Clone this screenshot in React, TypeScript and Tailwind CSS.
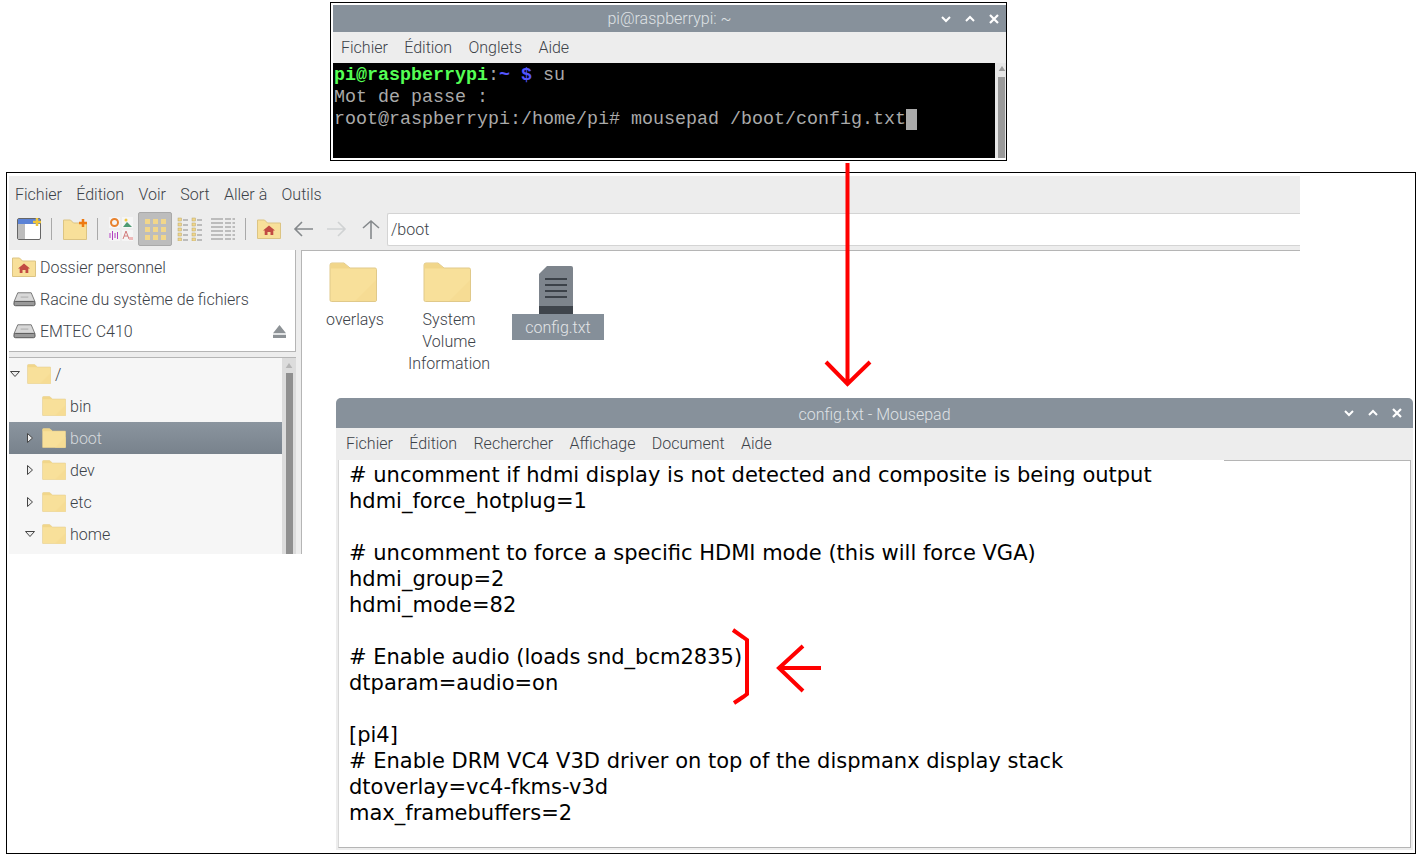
const ui = "font-['Roboto','Liberation_Sans',sans-serif] font-light";

function Folder({ className }: { className: string }) {
  return (
    <svg viewBox="0 0 48 40" className={className}>
      <path d="M1 3a2 2 0 0 1 2-2h12l6 5h25a1.500 1.500 0 0 1 1.500 1.500V38a1.500 1.500 0 0 1-1.500 1.500H2.500A1.500 1.500 0 0 1 1 38Z" fill="#f8e09a" stroke="#e0c98a" />
      <path d="M1.500 3a1.500 1.500 0 0 1 1.500-1.500h12l6 5H1.500Z" fill="#f1d68a" />
      <path d="M26 39 47 18V38a1 1 0 0 1-1 1Z" fill="#f6dc94" />
    </svg>
  );
}

function HomeFolder({ className }: { className: string }) {
  return (
    <svg viewBox="0 0 24 20" className={className}>
      <path d="M.5 1h7l3 3h13v15.500H.5Z" fill="#f8e09a" stroke="#dcc483" />
      <path d="M12 6.500 18 11.500h-1.700V16h-2.800v-3h-3v3H7.700v-4.500H6Z" fill="#c24b43" />
    </svg>
  );
}

function Drive({ className }: { className: string }) {
  return (
    <svg viewBox="0 0 24 16" className={className}>
      <path d="M5 1.500h14l4 9.500H1Z" fill="#d8d8d8" stroke="#777" />
      <rect x="1" y="10.500" width="22" height="4.500" rx="1.500" fill="#9a9a9a" stroke="#555" />
      <path d="M8 6h8" stroke="#aaa" />
    </svg>
  );
}

function WinButtons() {
  return (
    <div className="flex items-center gap-[14px]">
      <svg viewBox="0 0 10 10" className="w-[10px] h-[10px]"><path d="M1 3l4 4 4-4" fill="none" stroke="#fff" strokeWidth="2" /></svg>
      <svg viewBox="0 0 10 10" className="w-[10px] h-[10px]"><path d="M1 7l4-4 4 4" fill="none" stroke="#fff" strokeWidth="2" /></svg>
      <svg viewBox="0 0 10 10" className="w-[10px] h-[10px]"><path d="M1 1l8 8M9 1l-8 8" fill="none" stroke="#fff" strokeWidth="2.200" /></svg>
    </div>
  );
}

function TitleBar({ title, className, titleClass }: { title: string; className: string; titleClass: string }) {
  return (
    <div className={`relative flex items-center justify-end bg-[#87919b] ${className}`}>
      <span className={`absolute inset-0 flex items-center justify-center text-[16px] text-[#dfe2e5] ${titleClass} ${ui}`}>{title}</span>
      <div className="relative"><WinButtons /></div>
    </div>
  );
}

function Sep() {
  return <div className="w-px h-[22px] bg-[#a9a9a9]" />;
}

function Terminal() {
  return (
    <div className="absolute left-[330px] top-[2px] w-[677px] h-[159px] border border-black pl-[2px] pt-[2px] pb-[2px] bg-white">
      <TitleBar title="pi@raspberrypi: ~" className="h-[27px] pr-[7px]" titleClass="pt-px" />
      <div className={`flex gap-[16.300px] h-[31px] items-center pl-[8px] bg-[#ededed] text-[16px] text-[#3c4248] ${ui}`}>
        <span>Fichier</span><span>Édition</span><span>Onglets</span><span>Aide</span>
      </div>
      <div className="flex h-[95px]">
        <div className="flex-1 bg-black pl-px pt-[2px] font-['Liberation_Mono',monospace] text-[18.330px] leading-[22px] text-[#aaaaaa] whitespace-pre">
          <div><b className="text-[#55ff55]">pi@raspberrypi</b>:<b className="text-[#5555ff]">~ $</b> su</div>
          <div>Mot de passe :</div>
          <div className="flex">root@raspberrypi:/home/pi# mousepad /boot/config.txt<span className="w-[11px] h-[21px] bg-[#aaaaaa]" /></div>
        </div>
        <div className="w-[11px] bg-[#e6e6e6] flex flex-col items-center pl-[2px] pt-[3px]">
          <svg viewBox="0 0 8 6" className="w-[8px] h-[5px]"><path d="M4 0l4 6H0Z" fill="#9a9a9a" /></svg>
          <div className="w-[7px] flex-1 mt-[6px] bg-[#9a9a9a]" />
        </div>
      </div>
    </div>
  );
}

function GridViewIcon() {
  return (
    <div className="grid grid-cols-3 gap-x-[3px] gap-y-[3px]">
      {Array.from({ length: 9 }).map((_, i) => (
        <div key={i} className="w-[5px] h-[5px] bg-[#f1d68a]" />
      ))}
    </div>
  );
}

function ListIcon() {
  return (
    <svg viewBox="0 0 26 24" className="w-[26px] h-[24px]">
      {[1, 6, 11, 16, 21].map((y) => (
        <g key={y}>
          <rect x="1" y={y} width="3.500" height="3" fill="#f1d68a" stroke="#b9a66d" strokeWidth=".5" />
          <path d={`M6 ${y + 2}h5`} stroke="#8b8b8b" />
          <rect x="15" y={y} width="3.500" height="3" fill="#f1d68a" stroke="#b9a66d" strokeWidth=".5" />
          <path d={`M20 ${y + 2}h5`} stroke="#8b8b8b" />
        </g>
      ))}
    </svg>
  );
}

function DetailIcon() {
  return (
    <svg viewBox="0 0 24 24" className="w-[24px] h-[24px]">
      {[2, 6, 10, 14, 18, 22].map((y) => (
        <g key={y}>
          <path d={`M0 ${y}h12`} stroke="#8b8b8b" />
          <path d={`M14 ${y}h6M21.500 ${y}h2.500`} stroke="#8b8b8b" />
        </g>
      ))}
    </svg>
  );
}

function Toolbar() {
  return (
    <div className="flex items-center h-[38px] pb-[4px] pl-[8px]">
      <svg viewBox="0 0 24 22" className="w-[24px] h-[22px]">
        <rect x=".5" y=".5" width="23" height="21" rx="1.500" fill="#fff" stroke="#666" />
        <rect x="1" y="1" width="22" height="5" fill="#5b82d6" />
        <rect x="1" y="6" width="7" height="15" fill="#bdbdbd" />
        <path d="M20 0v8M16 4h8" stroke="#f0c63c" strokeWidth="2.500" />
      </svg>
      <div className="ml-[10px]"><Sep /></div>
      <svg viewBox="0 0 24 21" className="ml-[11px] w-[24px] h-[21px]">
        <path d="M.5 1h7l3 3h13v16.500H.5Z" fill="#f8e09a" stroke="#dcc483" />
        <path d="M20 0v8M16 4h8" stroke="#ee7a12" strokeWidth="2.500" />
      </svg>
      <div className="ml-[10px]"><Sep /></div>
      <svg viewBox="0 0 24 24" className="ml-[11px] w-[24px] h-[24px]">
        <rect x="0" y="0" width="11" height="11" fill="#f5f5f5" />
        <circle cx="5.500" cy="5.500" r="3.500" fill="none" stroke="#e8822e" strokeWidth="2" />
        <rect x="13" y="0" width="11" height="11" fill="#f5f5f5" />
        <path d="M14 10l4-5 5 5Z" fill="#4d9a72" />
        <circle cx="17" cy="3" r="1.500" fill="#f0c63c" />
        <rect x="0" y="13" width="11" height="11" fill="#f5f5f5" />
        <path d="M1 16v5M3.500 14v9M6 16v5M8.500 15v7" stroke="#b13fc0" />
        <rect x="13" y="13" width="11" height="11" fill="#f5f5f5" />
        <path d="M14 22l3-8 3 8M15 19h4" fill="none" stroke="#d27c7c" />
        <rect x="20" y="20" width="4" height="3" fill="#eeb9b9" />
      </svg>
      <div className="ml-[5px] flex items-center justify-center w-[34px] h-[34px] bg-[#bdbdbd] border border-[#a9a9a9] rounded-[2px]">
        <GridViewIcon />
      </div>
      <div className="ml-[5px]"><ListIcon /></div>
      <div className="ml-[8px]"><DetailIcon /></div>
      <div className="ml-[10px]"><Sep /></div>
      <HomeFolder className="ml-[11px] w-[24px] h-[20px]" />
      <svg viewBox="0 0 20 16" className="ml-[12px] w-[20px] h-[16px]"><path d="M20 8H2M9 1 2 8l7 7" fill="none" stroke="#85898c" strokeWidth="1.600" /></svg>
      <svg viewBox="0 0 20 16" className="ml-[14px] w-[20px] h-[16px]"><path d="M0 8h18M11 1l7 7-7 7" fill="none" stroke="#d0d2d3" strokeWidth="1.600" /></svg>
      <svg viewBox="0 0 18 20" className="ml-[15px] w-[18px] h-[20px]"><path d="M9 20V2M1 9l8-7 8 7" fill="none" stroke="#85898c" strokeWidth="1.600" /></svg>
      <div className="ml-[7px] flex-1 h-[33px] bg-white border border-r-0 border-[#d4d4d4] rounded-l-[2px] pl-[3px] pt-px flex items-center text-[#3c4248]">/boot</div>
    </div>
  );
}

function PlaceRow({ icon, label, eject }: { icon: React.ReactNode; label: string; eject?: boolean }) {
  return (
    <div className="flex items-center h-[32px] pl-[3px]">
      <div className="w-[24px] flex justify-center">{icon}</div>
      <span className="ml-[4px] pt-px">{label}</span>
      {eject && (
        <svg viewBox="0 0 12 12" className="ml-auto mr-[9px] w-[13px] h-[13px]"><path d="M6 0l6 7.500H0ZM0 9h12v3H0Z" fill="#8d9296" /></svg>
      )}
    </div>
  );
}

const tree = [
  { label: "/", indent: 0, arrow: "down" },
  { label: "bin", indent: 15 },
  { label: "boot", indent: 15, arrow: "right", selected: true },
  { label: "dev", indent: 15, arrow: "right" },
  { label: "etc", indent: 15, arrow: "right" },
  { label: "home", indent: 15, arrow: "down" },
];

function TreeRow({ label, indent, arrow, selected }: { label: string; indent: number; arrow?: string; selected?: boolean }) {
  return (
    <div
      className={`flex items-center h-[32px] ${selected ? "bg-gradient-to-b from-[#8b959f] to-[#78828c] text-[#d5d9dd]" : ""}`}
      style={{ paddingLeft: indent }}
    >
      <div className="w-[18px] pr-[6px] flex justify-center">
        {arrow === "down" && <svg viewBox="0 0 10 6" className="w-[10px] h-[6px] shrink-0"><path d="M.5.500h9L5 5.500Z" fill="#eee" stroke="#444" /></svg>}
        {arrow === "right" && <svg viewBox="0 0 6 10" className="w-[6px] h-[10px] shrink-0"><path d="M.5.500v9L5.500 5Z" fill="#eee" stroke="#444" /></svg>}
      </div>
      <Folder className="w-[24px] h-[20px]" />
      <span className="ml-[4px] pt-px">{label}</span>
    </div>
  );
}

function Sidebar() {
  return (
    <div className="flex flex-col w-[292px] shrink-0">
      <div className="w-[287px] h-[102px] bg-white border-r border-b border-[#b5b5b5] pt-[1px]">
        <PlaceRow icon={<HomeFolder className="w-[24px] h-[20px]" />} label="Dossier personnel" />
        <PlaceRow icon={<Drive className="w-[23px] h-[16px]" />} label="Racine du système de fichiers" />
        <PlaceRow icon={<Drive className="w-[23px] h-[16px]" />} label="EMTEC C410" eject />
      </div>
      <div className="mt-[5px] w-[287px] h-[197px] flex bg-[#f6f6f6] border-t border-[#b5b5b5]">
        <div className="w-[273px]">
          {tree.map((t) => (
            <TreeRow key={t.label} {...t} />
          ))}
        </div>
        <div className="w-[14px] bg-[#dcdcdc] flex flex-col items-center pt-[5px]">
          <svg viewBox="0 0 8 6" className="w-[8px] h-[5px]"><path d="M4 0l4 6H0Z" fill="#b5b5b5" /></svg>
          <div className="w-[7px] flex-1 mt-[5px] bg-[#8f8f8f]" />
        </div>
      </div>
    </div>
  );
}

function FileItem({ lines }: { lines: string[] }) {
  return (
    <div className="w-[94px] flex flex-col items-center text-center leading-[22px]">
      <Folder className="w-[48px] h-[40px] mr-[4px]" />
      <div className="mt-[7px]">
        {lines.map((l) => (
          <div key={l}>{l}</div>
        ))}
      </div>
    </div>
  );
}

function FileManager() {
  return (
    <div className="absolute left-[6px] top-[172px] w-[1410px] h-[682px] border border-black pl-[2px] pt-[3px]">
      <div className={`w-[1291px] h-[378px] flex flex-col bg-[#ededed] text-[16px] text-[#3c4248] ${ui}`}>
        <div className="flex items-center gap-[14.300px] h-[36px] pl-[6px] pt-[1px]">
          <span>Fichier</span><span>Édition</span><span>Voir</span><span>Sort</span><span>Aller à</span><span>Outils</span>
        </div>
        <Toolbar />
        <div className="flex flex-1">
          <Sidebar />
          <div className="flex-1 bg-white border-t border-l border-[#b5b5b5] pt-[11px] pl-[6px] flex items-start">
            <FileItem lines={["overlays"]} />
            <FileItem lines={["System", "Volume", "Information"]} />
            <div className="ml-[16px] w-[92px] flex flex-col items-center pt-[4px]">
              <svg viewBox="0 0 34 48" className="w-[34px] h-[48px] mr-[4px]">
                <path d="M8 0h24a2 2 0 0 1 2 2v46H0V8Z" fill="#7d848c" />
                <rect x="0" y="40" width="34" height="8" fill="#3f454c" />
                <path d="M6 13h22M6 19h22M6 25h22M6 31h22" stroke="#3c4249" strokeWidth="2" />
              </svg>
              <div className="w-[92px] h-[26px] pt-[2px] flex items-center justify-center bg-[#858f99] text-[#e3e5e7]">config.txt</div>
            </div>
          </div>
        </div>
      </div>
    </div>
  );
}

const configLines = [
  "# uncomment if hdmi display is not detected and composite is being output",
  "hdmi_force_hotplug=1",
  "",
  "# uncomment to force a specific HDMI mode (this will force VGA)",
  "hdmi_group=2",
  "hdmi_mode=82",
  "",
  "# Enable audio (loads snd_bcm2835)",
  "dtparam=audio=on",
  "",
  "[pi4]",
  "# Enable DRM VC4 V3D driver on top of the dispmanx display stack",
  "dtoverlay=vc4-fkms-v3d",
  "max_framebuffers=2",
];

function Mousepad() {
  return (
    <div className="absolute left-[336px] top-[398px] w-[1077px] h-[452px] flex flex-col bg-[#ededed] overflow-hidden rounded-t-[5px]">
      <TitleBar title="config.txt - Mousepad" className="h-[30px] shrink-0 pr-[11px]" titleClass="pt-[3px]" />
      <div className={`flex gap-[16.300px] h-[32px] shrink-0 items-center pl-[10px] text-[16px] text-[#3c4248] ${ui}`}>
        <span>Fichier</span><span>Édition</span><span>Rechercher</span><span>Affichage</span><span>Document</span><span>Aide</span>
      </div>
      <div className="relative flex-1 mx-[2px] mb-[2px] bg-white border border-t-0 border-[#b5b5b5] border-l-[#d8d8d8] pl-[10px] pt-[2px] font-['DejaVu_Sans',sans-serif] text-[21px] leading-[26px] text-black whitespace-pre">
        <div className="absolute right-0 top-0 w-[186px] h-px bg-[#b5b5b5]" />
        {configLines.map((line, i) => (
          <div key={i} className="h-[26px]">{line}</div>
        ))}
      </div>
    </div>
  );
}

function Annotations() {
  return (
    <svg viewBox="0 0 1420 856" className="absolute inset-0 w-[1420px] h-[856px] pointer-events-none">
      <g fill="none" stroke="#ff0000" strokeWidth="4">
        <path d="M847.500 163V384M826 362l21.500 22L870 362" />
        <path d="M733 630l10 7 4 3v54l-4 3-9 6" />
        <path d="M821 668H779M803 646l-24 22 24 23" />
      </g>
    </svg>
  );
}

export default function App() {
  return (
    <div className="relative w-[1420px] h-[856px] bg-white overflow-hidden">
      <FileManager />
      <Terminal />
      <Mousepad />
      <Annotations />
    </div>
  );
}
